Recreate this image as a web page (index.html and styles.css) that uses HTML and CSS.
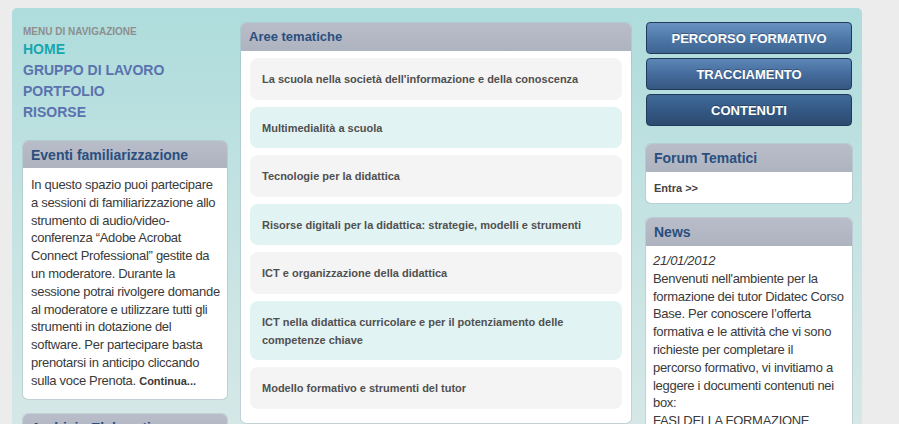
FILE: index.html
```html
<!DOCTYPE html>
<html lang="it">
<head>
<meta charset="utf-8">
<title>Didatec</title>
<link rel="stylesheet" href="styles.css">
</head>
<body>
<div class="page">
  <div class="col col-left">
    <nav class="menu">
      <div class="menu-title">MENU DI NAVIGAZIONE</div>
      <a class="menu-item active" href="#">HOME</a>
      <a class="menu-item" href="#">GRUPPO DI LAVORO</a>
      <a class="menu-item" href="#">PORTFOLIO</a>
      <a class="menu-item" href="#">RISORSE</a>
    </nav>
    <div class="box box-events">
      <div class="box-head">Eventi familiarizzazione</div>
      <div class="box-body text">In questo spazio puoi partecipare a sessioni di familiarizzazione allo strumento di audio/video-conferenza “Adobe Acrobat Connect Professional” gestite da un moderatore. Durante la sessione potrai rivolgere domande al moderatore e utilizzare tutti gli strumenti in dotazione del software. Per partecipare basta prenotarsi in anticipo cliccando sulla voce Prenota. <a class="more" href="#">Continua...</a></div>
    </div>
    <div class="box box-archive">
      <div class="box-head">Archivio Elaborati</div>
    </div>
  </div>

  <div class="col col-center">
    <div class="box box-areas">
      <div class="box-head small">Aree tematiche</div>
      <div class="areas">
        <a class="area" href="#">La scuola nella società dell'informazione e della conoscenza</a>
        <a class="area alt" href="#">Multimedialità a scuola</a>
        <a class="area" href="#">Tecnologie per la didattica</a>
        <a class="area alt" href="#">Risorse digitali per la didattica: strategie, modelli e strumenti</a>
        <a class="area" href="#">ICT e organizzazione della didattica</a>
        <a class="area alt" href="#">ICT nella didattica curricolare e per il potenziamento delle competenze chiave</a>
        <a class="area" href="#">Modello formativo e strumenti del tutor</a>
      </div>
    </div>
  </div>

  <div class="col col-right">
    <div class="buttons">
      <a class="btn btn-1" href="#">PERCORSO FORMATIVO</a>
      <a class="btn btn-2" href="#">TRACCIAMENTO</a>
      <a class="btn btn-3" href="#">CONTENUTI</a>
    </div>
    <div class="box box-forum">
      <div class="box-head">Forum Tematici</div>
      <div class="box-body"><a class="enter" href="#">Entra &gt;&gt;</a></div>
    </div>
    <div class="box box-news">
      <div class="box-head">News</div>
      <div class="box-body text"><em class="date">21/01/2012</em><br>Benvenuti nell'ambiente per la formazione dei tutor Didatec Corso Base. Per conoscere l’offerta formativa e le attività che vi sono richieste per completare il percorso&nbsp;formativo, vi invitiamo a leggere i documenti contenuti nei box:<br>FASI DELLA FORMAZIONE</div>
    </div>
  </div>
</div>
</body>
</html>
```

FILE: styles.css
```css
html, body {
  margin: 0;
  padding: 0;
}
body {
  background: #ececec;
  font-family: "Liberation Sans", Arial, sans-serif;
  height: 424px;
  overflow: hidden;
}
a { text-decoration: none; }

.page {
  margin: 8px 0 0 12px;
  width: 850px;
  height: 430px;
  box-sizing: border-box;
  padding: 14px 10px 0 11px;
  border-radius: 5px 5px 0 0;
  background: linear-gradient(180deg, #aedcdc 0%, #c3e2e2 45%, #d6e8e7 100%);
  display: flex;
  gap: 14px;
  align-items: flex-start;
}
.col-left { width: 204px; flex: none; }
.col-center { width: 390px; flex: none; padding-top: 1px; }
.col-right { width: 206px; flex: none; margin-left: 1px; }

/* menu */
.menu {
  display: flex;
  flex-direction: column;
  padding-top: 3px;
}
.menu-title {
  font-size: 10px;
  font-weight: bold;
  color: #8e8e8e;
  line-height: 14px;
}
.menu-item {
  font-size: 14px;
  font-weight: bold;
  line-height: 21px;
  color: #5a72ad;
}
.menu-item.active { color: #17a7ae; }

/* boxes */
.box {
  border-radius: 5px;
  overflow: hidden;
  background: #fff;
  box-shadow: 0 0 0 1px rgba(160, 170, 180, 0.35);
}
.box-head {
  height: 27px;
  line-height: 28px;
  padding: 0 8px;
  font-size: 14px;
  font-weight: bold;
  color: #2a4f7e;
  background: linear-gradient(180deg, #b9bdc9 0%, #aeb3c0 100%);
}
.box-head.small { font-size: 13px; height: 28px; }
.box-body {
  padding: 8px 6px 8px 8px;
}
.text {
  font-size: 13px;
  line-height: 17.8px;
  letter-spacing: -0.3px;
  color: #3a3a3a;
}
.more {
  font-size: 11px;
  font-weight: bold;
  letter-spacing: 0;
  color: #3a3a3a;
}

.box-events { margin-top: 18px; }
.box-archive { margin-top: 15px; }

/* central areas */
.areas {
  display: flex;
  flex-direction: column;
  gap: 7px;
  padding: 7px 9px 14px 9px;
}
.area {
  display: block;
  border-radius: 8px;
  background: #f4f4f4;
  padding: 12px 12px 11.5px 12px;
  font-size: 11px;
  font-weight: bold;
  line-height: 18px;
  color: #505050;
}
.area.alt { background: #e2f3f3; }

/* buttons */
.buttons {
  display: flex;
  flex-direction: column;
  gap: 4px;
  margin-top: 0;
}
.btn {
  display: block;
  height: 30px;
  line-height: 31px;
  text-align: center;
  font-size: 13px;
  font-weight: bold;
  color: #fff;
  border: 1px solid #213a5a;
  border-radius: 4px;
  text-shadow: 0 -1px 0 rgba(0,0,0,0.3);
}
.btn-1 { background: linear-gradient(180deg, #6792c2 0%, #4c76a6 55%, #3e6592 100%); }
.btn-2 { background: linear-gradient(180deg, #5c87b7 0%, #43699a 55%, #35587f 100%); }
.btn-3 { background: linear-gradient(180deg, #416a98 0%, #335783 55%, #2c4a6e 100%); }

.box-forum { margin-top: 18px; }
.box-forum .box-head { height: 28px; }
.box-forum .box-body { padding: 8px 8px 8px 8px; line-height: 13px; }
.enter {
  font-size: 11px;
  font-weight: bold;
  color: #444;
}
.box-news { margin-top: 15px; }
.box-news .box-head { height: 28px; }
.box-news .box-body { padding: 6px 6px 8px 7px; }
.date { font-style: italic; }
```
